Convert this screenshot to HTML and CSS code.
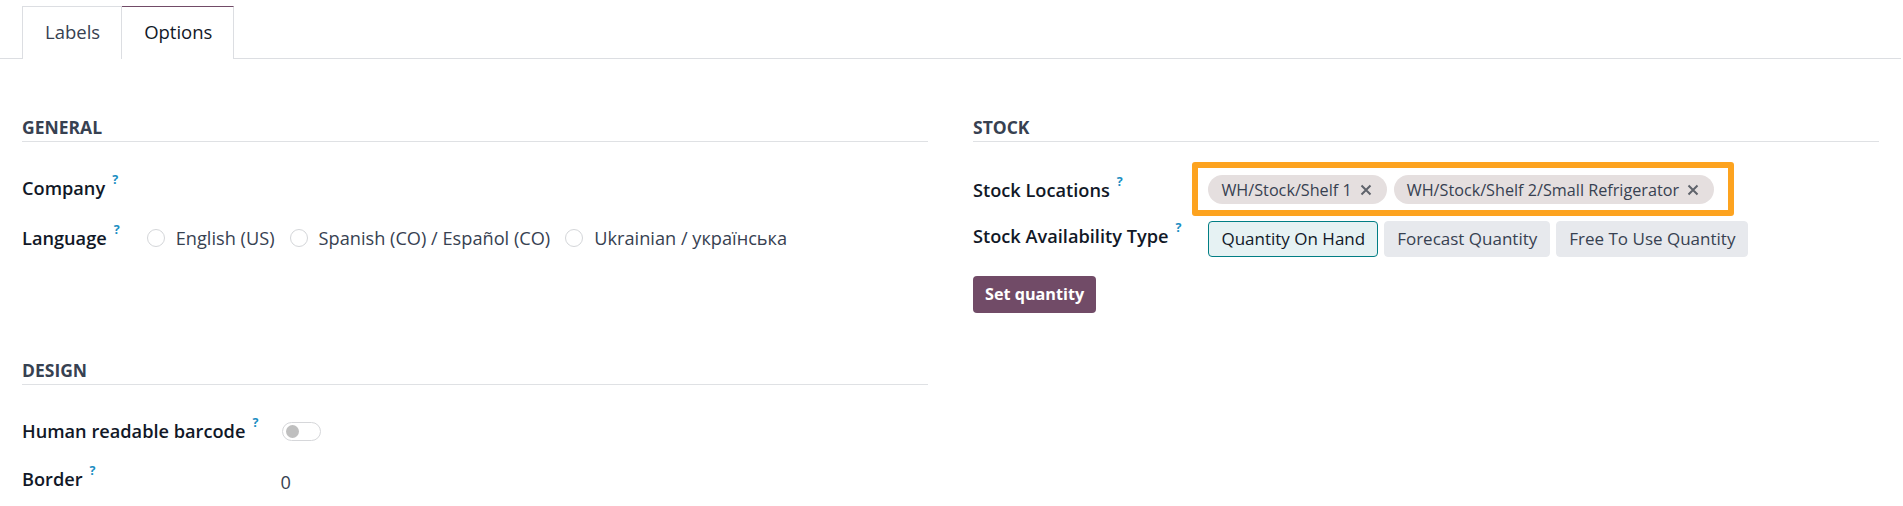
FILE: index.html
```html
<!DOCTYPE html>
<html lang="en">
<head>
<meta charset="utf-8">
<title>Options</title>
<link rel="stylesheet" href="styles.css">
</head>
<body>
<div class="tabs">
  <div class="tab">Labels</div>
  <div class="tab active">Options</div>
</div>
<div class="sheet">
  <div class="column">
    <section class="group">
      <h3 class="separator">General</h3>
      <div class="fields general">
        <div class="label">Company<sup class="help">?</sup></div>
        <div class="value"></div>
        <div class="label">Language<sup class="help">?</sup></div>
        <div class="value radios">
          <label class="radio"><span class="circle"></span>English (US)</label>
          <label class="radio"><span class="circle"></span>Spanish (CO) / Español (CO)</label>
          <label class="radio"><span class="circle"></span>Ukrainian / українська</label>
        </div>
      </div>
    </section>
    <section class="group design">
      <h3 class="separator">Design</h3>
      <div class="fields designfields">
        <div class="label">Human readable barcode<sup class="help">?</sup></div>
        <div class="value"><span class="switch"><span class="knob"></span></span></div>
        <div class="label">Border<sup class="help">?</sup></div>
        <div class="value number">0</div>
      </div>
    </section>
  </div>
  <div class="column">
    <section class="group">
      <h3 class="separator">Stock</h3>
      <div class="fields stockfields">
        <div class="label">Stock Locations<sup class="help">?</sup></div>
        <div class="value">
          <div class="tags highlight">
            <span class="tag">WH/Stock/Shelf 1<svg class="x" viewBox="0 0 12 12"><path d="M1.5 1.5L10.5 10.5M10.5 1.5L1.5 10.5"/></svg></span>
            <span class="tag">WH/Stock/Shelf 2/Small Refrigerator<svg class="x" viewBox="0 0 12 12"><path d="M1.5 1.5L10.5 10.5M10.5 1.5L1.5 10.5"/></svg></span>
          </div>
        </div>
        <div class="label">Stock Availability Type<sup class="help">?</sup></div>
        <div class="value badges">
          <span class="badge selected">Quantity On Hand</span>
          <span class="badge">Forecast Quantity</span>
          <span class="badge">Free To Use Quantity</span>
        </div>
      </div>
      <button class="primary">Set quantity</button>
    </section>
  </div>
</div>
</body>
</html>
```
FILE: styles.css
```css
* { box-sizing: border-box; }
html, body { margin: 0; padding: 0; background: #fff; }
body {
  font-family: "Open Sans", "Noto Sans", sans-serif;
  font-size: 18.2px;
  line-height: 26px;
  color: #374151;
  width: 1903px;
  height: 506px;
  overflow: hidden;
}
.tabs {
  display: flex;
  padding: 6px 0 0 22px;
  border-bottom: 1px solid #dcdee2;
  width: 1901px;
  height: 59px;
}
.tab {
  height: 53px;
  padding: 12px 21px 0 22px;
  border: 1px solid #dcdee2;
  border-bottom: none;
  font-size: 18.5px;
  color: #374151;
  background: #fff;
}
.tab + .tab { border-left: none; }
.tab.active {
  color: #111827;
  border-top: 1px solid #714b67;
  padding-left: 22px;
  padding-right: 21px;
  margin-bottom: -1px;
}
.sheet {
  display: grid;
  grid-template-columns: 906px 906px;
  column-gap: 45px;
  padding: 0 0 0 22px;
}
.separator {
  margin: 55px 0 0 0;
  font-size: 17.5px;
  font-weight: 700;
  text-transform: uppercase;
  color: #374151;
  line-height: 26px;
  padding-bottom: 1px;
  border-bottom: 1px solid #dfe1e4;
}
.fields {
  display: grid;
  grid-template-columns: max-content 1fr;
  align-items: start;
  margin-top: 33px;
}
.general { row-gap: 24px; }
.designfields { row-gap: 22px; }
.label {
  font-weight: 600;
  color: #111827;
  padding-right: 27px;
  white-space: nowrap;
}
.help {
  font-size: 12.5px;
  font-weight: 700;
  color: #1b8ec2;
  margin-left: 7px;
  vertical-align: top;
  line-height: 16px;
  position: relative;
  top: -3px;
}
.radios { display: flex; align-items: center; gap: 15px; }
.radio { display: flex; align-items: center; gap: 11px; white-space: nowrap; }
.circle {
  width: 18px; height: 18px;
  border-radius: 50%;
  border: 1px solid #d4d6d9;
  background: #fff;
}
.design .separator { margin-top: 106px; }
.switch {
  display: block;
  width: 39px; height: 19px;
  border: 1px solid #d6d7da;
  border-radius: 10px;
  margin: 4px 0 0 -3px;
  padding: 2px 0 0 3px;
}
.knob { display: block; width: 13px; height: 13px; border-radius: 50%; background: #bfbfbf; }
.number { padding-top: 3px; margin-left: -5px; }
.stockfields { row-gap: 17px; }
.stockfields .label { padding-top: 2px; }
.tags { display: flex; gap: 7px; width: max-content; }
.highlight { position: relative; }
.highlight::after {
  content: "";
  position: absolute;
  left: -16px; right: -20px; top: -13px; bottom: -12px;
  border: 6px solid #fda31f;
  border-radius: 3px;
  pointer-events: none;
}
.tag {
  display: inline-flex;
  align-items: center;
  height: 29px;
  padding: 0 15px 0 13px;
  border-radius: 15px;
  background: #e5dfdf;
  color: #374151;
  font-size: 16.2px;
  white-space: nowrap;
}
.x { width: 12px; height: 12px; margin-left: 8px; stroke: #5f636b; stroke-width: 2; fill: none; }
.badges { display: flex; gap: 6px; }
.badge {
  display: inline-block;
  height: 36px;
  line-height: 34px;
  padding: 0 12px;
  border: 1px solid #e7e9ed;
  border-radius: 4px;
  background: #e7e9ed;
  color: #374151;
  font-size: 17px;
  white-space: nowrap;
}
.badge.selected { background: #e6f2f3; border-color: #017e84; color: #111827; }
.primary {
  margin-top: 19px;
  height: 37px;
  padding: 0 12px;
  border: none;
  border-radius: 4px;
  background: #714b67;
  color: #fff;
  font-family: inherit;
  font-size: 16.2px;
  font-weight: 700;
  line-height: 37px;
}
```
